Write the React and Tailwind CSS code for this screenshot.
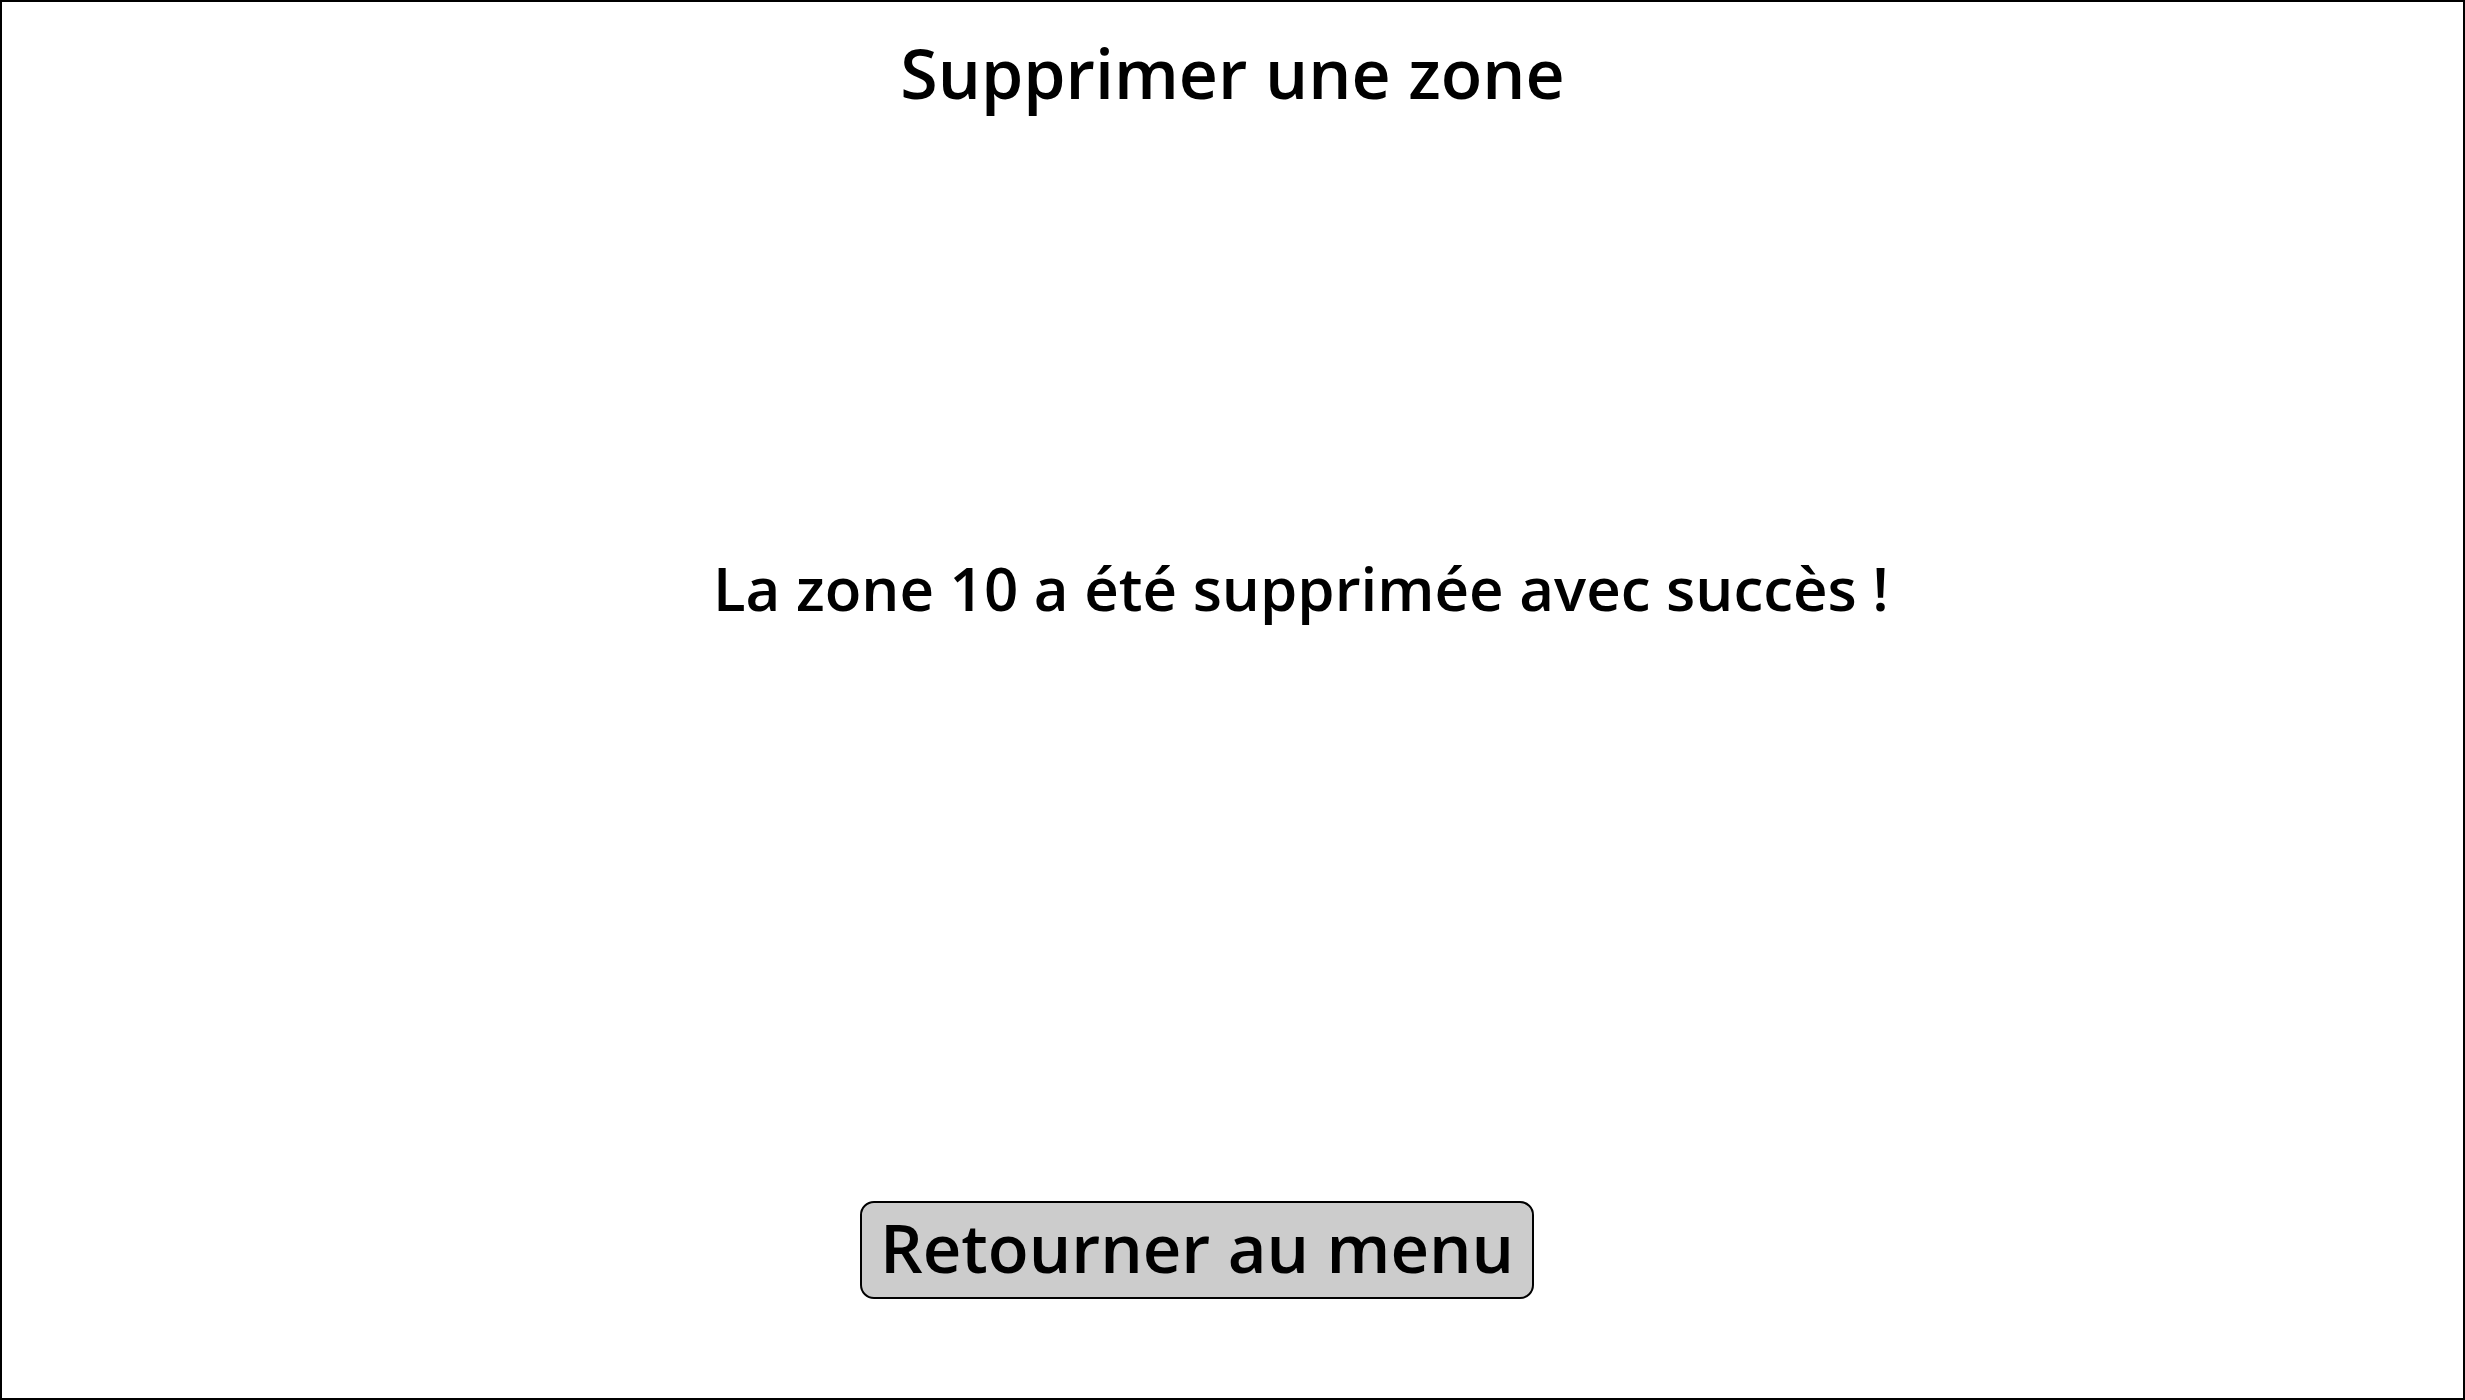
export default function App() {
    return (
        <div className="w-full h-[1400px] bg-white border-2 border-black flex flex-col text-black font-['Open_Sans',sans-serif] font-semibold">
            <h1 className="mt-[37px] text-center text-[68px] leading-none">Supprimer une zone</h1>
            <p className="mt-[451px] pl-[711px] text-[60px] leading-none">La zone 10 a été supprimée avec succès !</p>
            <div className="mt-[583px] pl-[858px]">
                <button className="w-[674px] h-[98px] bg-[#cccccc] border-2 border-black rounded-[14px] flex items-center justify-center pb-[6px] whitespace-nowrap text-[67px] leading-none">
                    Retourner au menu
                </button>
            </div>
        </div>
    );
}
